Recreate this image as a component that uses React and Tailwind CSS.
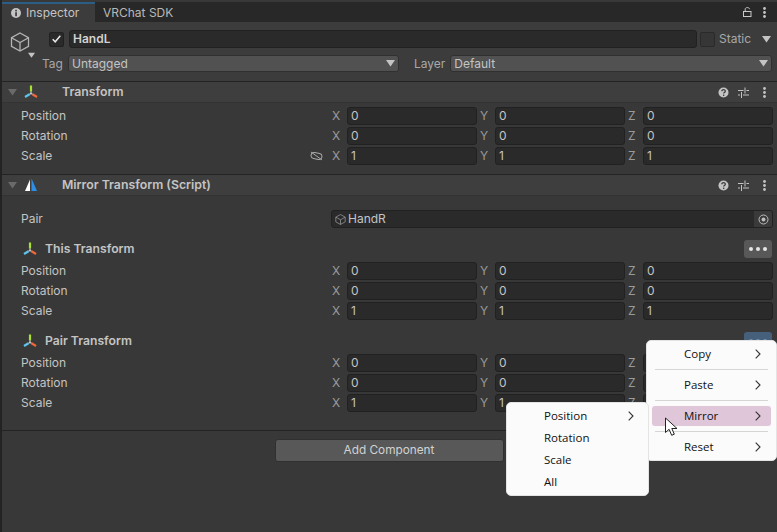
import React from "react";

// unity gizmo icon, three arms
const TransformIcon = () => (
  <svg width="14" height="14" viewBox="0 0 14 14" className="shrink-0">
    <path d="M7 0.5v6" stroke="#a6e22e" strokeWidth="2.2" />
    <path d="M5.5 9.2L1 12" stroke="#5cc4f0" strokeWidth="2.2" />
    <path d="M8.5 9.2L13 12" stroke="#f0673a" strokeWidth="2.2" />
    <path d="M7 6.5v2M7 8.5L5.5 9.2M7 8.5l1.5 .7" stroke="#d8d8d8" strokeWidth="1.2" />
  </svg>
);

const MirrorIcon = () => (
  <svg width="14" height="14" viewBox="0 0 14 14" className="shrink-0">
    <path d="M6 1.5V13H1z" fill="#fff" />
    <path d="M7.5 0.5L13 13H7.5z" fill="#2d8fe6" />
  </svg>
);

const Tri = ({ className }) => (
  <svg width="9" height="7" viewBox="0 0 9 7" className={className}>
    <path d="M0 0h9L4.5 6.5z" fill="currentColor" />
  </svg>
);

const CubeIcon = ({ size, stroke, width }) => (
  <svg width={size} height={size} viewBox="0 0 20 20" fill="none" stroke={stroke} strokeWidth={width} className="shrink-0">
    <path d="M10 1l8.5 4.7v8.6L10 19l-8.5-4.7V5.7z" />
    <path d="M1.5 5.7L10 10.5l8.5-4.8M10 10.5V19" />
  </svg>
);

const Dots = ({ className }) => (
  <svg width="3" height="11" viewBox="0 0 3 11" className={className}>
    <circle cx="1.5" cy="1.5" r="1.4" fill="#c4c4c4" />
    <circle cx="1.5" cy="5.5" r="1.4" fill="#c4c4c4" />
    <circle cx="1.5" cy="9.5" r="1.4" fill="#c4c4c4" />
  </svg>
);

const HeaderTools = () => (
  <div className="ml-auto flex items-center">
    <svg width="11" height="11" viewBox="0 0 11 11" className="mr-[9px]">
      <circle cx="5.5" cy="5.5" r="5" fill="#c4c4c4" />
      <path d="M3.8 4.2c0-2.2 3.5-2.2 3.5 0 0 1.3-1.7 1.2-1.7 2.4" stroke="#3e3e3e" strokeWidth="1.3" fill="none" />
      <rect x="5" y="7.6" width="1.3" height="1.4" fill="#3e3e3e" />
    </svg>
    <svg width="11" height="11" viewBox="0 0 11 11" className="mr-[14px]" stroke="#c4c4c4" strokeWidth="1">
      <path d="M0 3.5h5.5M8.5 3.5H11M7 0.5v6M0 8h2M5 8h6M3.5 5v6" fill="none" />
    </svg>
    <Dots className="mr-[11px]" />
  </div>
);

const Header = ({ icon, title }) => (
  <div className="h-[20px] bg-[#3e3e3e] border-b border-[#333333] flex items-center box-content shrink-0">
    <Tri className="ml-[6px] text-[#6a6a6a] w-[9px]" />
    <div className="ml-[7px] w-[14px] flex justify-center">{icon}</div>
    <span className="ml-[24px] font-semibold text-[12.3px] text-[#c4c4c4]">{title}</span>
    <HeaderTools />
  </div>
);

const Field = ({ axis, value }) => (
  <div className="flex items-center">
    <span className="w-[15px] text-[#9a9a9a]">{axis}</span>
    <div className="h-[18px] w-[130px] rounded-[3px] bg-[#2a2a2a] border border-[#212121] flex items-center pl-[3px] text-[#c4c4c4]">
      {value}
    </div>
  </div>
);

const VecRow = ({ label, value, linked }) => (
  <div className="h-[20px] flex items-center shrink-0">
    <span className="ml-[19px] text-[#c4c4c4]">{label}</span>
    <div className="ml-auto mr-[4px] flex items-center gap-[3px]">
      {linked && (
        <svg width="13" height="10" viewBox="0 0 13 10" fill="none" stroke="#a8a8a8" strokeWidth="1" className="mr-[6px]">
          <rect x="1" y="2" width="11" height="6" rx="3" transform="rotate(12 6.5 5)" />
          <path d="M1 1l11 8" />
        </svg>
      )}
      <Field axis="X" value={value} />
      <Field axis="Y" value={value} />
      <Field axis="Z" value={value} />
    </div>
  </div>
);

const Vec = ({ linked }) => (
  <>
    <VecRow label="Position" value="0" />
    <VecRow label="Rotation" value="0" />
    <VecRow label="Scale" value="1" linked={linked} />
  </>
);

const DotsButton = ({ className, dot }) => (
  <div className={`ml-auto mr-[5px] w-[28px] h-[18px] rounded-[3px] flex items-center justify-center gap-[3px] ${className}`}>
    <span className={`w-[4px] h-[4px] rounded-full ${dot}`} />
    <span className={`w-[4px] h-[4px] rounded-full ${dot}`} />
    <span className={`w-[4px] h-[4px] rounded-full ${dot}`} />
  </div>
);

const Chevron = () => (
  <svg width="6" height="10" viewBox="0 0 6 10" fill="none" stroke="#333333" strokeWidth="1.1">
    <path d="M0.7 0.7L5 5 0.7 9.3" />
  </svg>
);

const MenuItem = ({ label, active }) => (
  <div className={`mx-[5px] h-[20px] rounded-[3px] flex items-center pl-[32px] pr-[10px] ${active ? "bg-[#dfc6d9]" : ""}`}>
    <span>{label}</span>
    <span className="ml-auto"><Chevron /></span>
  </div>
);

const Separator = () => <div className="mx-[8px] my-[5px] h-px bg-[#d6d6d6]" />;

export default function App() {
  return (
    <div
      className="relative w-[777px] h-[532px] overflow-hidden bg-[#383838] border-l-2 border-[#232323] flex flex-col text-[12px] leading-none text-[#c4c4c4]"
      style={{ fontFamily: "Inter, sans-serif" }}
    >
      {/* tabs */}
      <div className="h-[20px] bg-[#282828] flex shrink-0 mt-[2px]">
        <div className="w-[93px] bg-[#3c3c3c] border-t-2 border-[#2c5d87] flex items-center pl-[9px] gap-[5px]">
          <svg width="10" height="10" viewBox="0 0 10 10">
            <circle cx="5" cy="5" r="5" fill="#c4c4c4" />
            <rect x="4.2" y="4.2" width="1.7" height="4" fill="#3c3c3c" />
            <rect x="4.2" y="1.8" width="1.7" height="1.6" fill="#3c3c3c" />
          </svg>
          <span>Inspector</span>
        </div>
        <div className="ml-[8px] flex items-center pt-[2px] text-[#b8b8b8]">VRChat SDK</div>
        <div className="ml-auto flex items-center gap-[11px] pr-[11px]">
          <svg width="9" height="10" viewBox="0 0 9 10" fill="none" stroke="#c8c8c8" strokeWidth="1">
            <rect x="0.5" y="4.5" width="7.5" height="5" />
            <path d="M2.2 4.5V2.2c0-2.2 4.3-2.2 4.3 0" />
          </svg>
          <Dots />
        </div>
      </div>

      {/* game object header */}
      <div className="h-[59px] bg-[#3c3c3c] border-b border-[#232323] box-content flex flex-col shrink-0">
        <div className="flex items-center mt-[8px] h-[18px]">
          <div className="ml-[8px] mt-[6px]">
            <CubeIcon size={20} stroke="#b4b4b4" width={1.3} />
          </div>
          <div className="ml-[19px] w-[15px] h-[15px] rounded-[2px] bg-[#2a2a2a] border border-[#212121] flex items-center justify-center">
            <svg width="9" height="8" viewBox="0 0 9 8" fill="none" stroke="#e8e8e8" strokeWidth="1.5">
              <path d="M0.7 4.3L3.2 6.8 8.3 0.8" />
            </svg>
          </div>
          <div className="ml-[5px] w-[628px] h-[18px] rounded-[3px] bg-[#2a2a2a] border border-[#212121] flex items-center pl-[3px] font-semibold text-[#d2d2d2]">
            HandL
          </div>
          <div className="ml-[3px] w-[15px] h-[15px] rounded-[2px] bg-[#363636] border border-[#2a2a2a]" />
          <span className="ml-[4px] text-[#a8a8a8]">Static</span>
          <Tri className="ml-[11px] text-[#c4c4c4]" />
        </div>
        <div className="flex items-center mt-[7px] h-[17px] relative">
          <Tri className="absolute left-[26px] -top-[3px] text-[#c4c4c4] w-[7px]" />
          <span className="ml-[40px] text-[#a8a8a8]">Tag</span>
          <div className="ml-[5px] w-[331px] h-[17px] rounded-[3px] bg-[#515151] border border-[#303030] flex items-center pl-[3px]">
            Untagged
            <Tri className="ml-auto mr-[3px] text-[#c4c4c4]" />
          </div>
          <span className="ml-[15px] text-[#a8a8a8]">Layer</span>
          <div className="ml-[5px] w-[322px] h-[17px] rounded-[3px] bg-[#515151] border border-[#303030] flex items-center pl-[3px]">
            Default
            <Tri className="ml-auto mr-[3px] text-[#c4c4c4]" />
          </div>
        </div>
      </div>

      {/* transform */}
      <Header icon={<TransformIcon />} title="Transform" />
      <div className="pt-[3px] pb-[8px] border-b border-[#232323] box-content h-[60px] shrink-0">
        <Vec linked />
      </div>

      {/* mirror transform */}
      <Header icon={<MirrorIcon />} title="Mirror Transform (Script)" />
      <div className="h-[235px] border-b border-[#232323] shrink-0 flex flex-col">
        <div className="mt-[13px] h-[20px] flex items-center shrink-0">
          <span className="ml-[19px]">Pair</span>
          <div className="ml-auto mr-[4px] w-[442px] h-[18px] rounded-[3px] bg-[#2a2a2a] border border-[#212121] flex items-center overflow-hidden">
            <div className="ml-[3px] mr-[2px]"><CubeIcon size={11} stroke="#a0a0a0" width={1.3} /></div>
            HandR
            <div className="ml-auto w-[18px] h-full bg-[#3a3a3a] flex items-center justify-center">
              <svg width="11" height="11" viewBox="0 0 11 11">
                <circle cx="5.5" cy="5.5" r="4.5" fill="none" stroke="#bcbcbc" strokeWidth="1" />
                <circle cx="5.5" cy="5.5" r="2" fill="#bcbcbc" />
              </svg>
            </div>
          </div>
        </div>
        <div className="mt-[10px] h-[20px] flex items-center shrink-0">
          <div className="ml-[21px] mr-[8px]"><TransformIcon /></div>
          <span className="font-semibold text-[12.2px]">This Transform</span>
          <DotsButton className="bg-[#585858]" dot="bg-[#e6e6e6]" />
        </div>
        <div className="mt-[2px]"><Vec /></div>
        <div className="mt-[10px] h-[20px] flex items-center shrink-0">
          <div className="ml-[21px] mr-[8px]"><TransformIcon /></div>
          <span className="font-semibold text-[12.2px]">Pair Transform</span>
          <DotsButton className="bg-[#46607c]" dot="bg-[#7d93aa]" />
        </div>
        <div className="mt-[2px]"><Vec /></div>
      </div>

      {/* add component */}
      <div className="flex justify-center shrink-0 pt-[8px] pr-[1px]">
        <div className="w-[229px] h-[23px] rounded-[3px] bg-[#585858] border border-[#303030] flex items-center justify-center text-[11.8px] text-[#d2d2d2]">
          Add Component
        </div>
      </div>

      {/* context menus */}
      <div
        className="absolute left-[644px] top-[340px] w-[131px] h-[121px] bg-[#fbfbfb] rounded-[5px] border border-[#e4e4e4] py-[3px] text-[11.5px] text-[#111111]"
        style={{ fontFamily: "'Open Sans', sans-serif" }}
      >
        <MenuItem label="Copy" />
        <Separator />
        <MenuItem label="Paste" />
        <Separator />
        <MenuItem label="Mirror" active />
        <Separator />
        <MenuItem label="Reset" />
      </div>
      <div
        className="absolute left-[504px] top-[402px] w-[143px] h-[94px] bg-[#fbfbfb] rounded-[5px] border border-[#e4e4e4] py-[2px] text-[11.5px] text-[#111111] flex flex-col"
        style={{ fontFamily: "'Open Sans', sans-serif" }}
      >
        {["Position", "Rotation", "Scale", "All"].map((label, i) => (
          <div key={label} className="h-[22px] shrink-0 flex items-center pl-[37px] pr-[14px]">
            <span>{label}</span>
            {i === 0 && <span className="ml-auto"><Chevron /></span>}
          </div>
        ))}
      </div>

      {/* mouse pointer */}
      <svg width="15" height="20" viewBox="0 0 15 20" className="absolute left-[662px] top-[417px]">
        <path d="M1.5 1v14.500l3.600-3.200 2.600 6 2.600-1.100-2.500-5.700h5.200z" fill="#fff" stroke="#222" strokeWidth="1" />
      </svg>
    </div>
  );
}
